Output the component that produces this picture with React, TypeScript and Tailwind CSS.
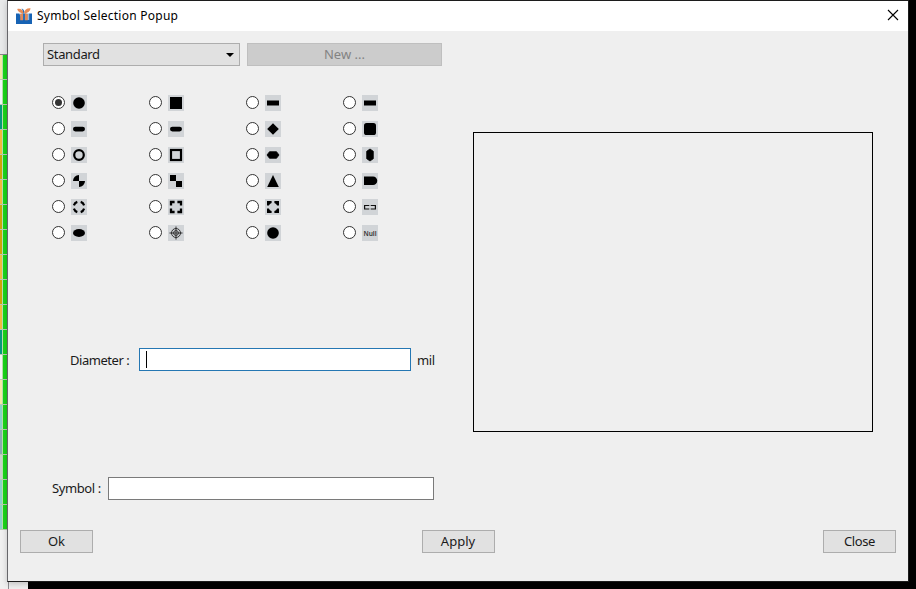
import { useState, type ReactNode } from "react";

const cells = [
  "bg-[#f4e8a8]", "bg-[#f1f5f8]", "bg-[#08987c]", "bg-[#f3b83e]", "bg-[#cfa208]",
  "bg-[#f3b83e]", "bg-[#cfa208]", "bg-[#cfa208]", "bg-[#f3b83e]", "bg-[#cfa208]",
  "bg-[#f3b83e]", "bg-[#08987c]", "bg-[#f4f4f4]", "bg-[#f4e8a8]", "bg-[#8bd0c8]",
  "bg-[#8ca9b0]", "bg-[#c9cfcb]", "bg-[#8bd0c8]", "bg-[#8bd0c8]",
];

const pill = <rect x="2" y="5.7" width="12" height="4.8" rx="2.4" />;
const bar = <rect x="2" y="5.5" width="12" height="5" />;
const disc = <circle cx="8" cy="8" r="5.8" />;

const symbols: { name: string; art: ReactNode }[] = [
  { name: "Round", art: disc },
  { name: "Square", art: <rect x="2" y="2" width="12" height="12" /> },
  { name: "Rectangle", art: bar },
  { name: "Rounded rectangle", art: bar },
  { name: "Oval", art: pill },
  { name: "Oblong", art: pill },
  { name: "Diamond", art: <path d="M8 2.2 13.8 8 8 13.8 2.2 8Z" /> },
  { name: "Octagon", art: <rect x="2" y="2" width="12" height="12" rx="2.6" /> },
  { name: "Donut", art: <circle cx="8" cy="8" r="4.8" fill="none" stroke="#000" strokeWidth="2.2" /> },
  { name: "Square donut", art: <rect x="3" y="3" width="10" height="10" fill="none" stroke="#000" strokeWidth="2.2" /> },
  { name: "Horizontal hexagon", art: <path d="M2 8 4.5 4.7h7L14 8l-2.5 3.3h-7Z" stroke="#000" strokeWidth=".8" strokeLinejoin="round" /> },
  { name: "Vertical hexagon", art: <path d="M8 2 11.3 4.3v7.4L8 14l-3.3-2.3V4.3Z" stroke="#000" strokeWidth=".8" strokeLinejoin="round" /> },
  { name: "Butterfly", art: <path d="M8 2v6H2A6 6 0 0 1 8 2ZM8 14V8h6a6 6 0 0 1-6 6Z" /> },
  { name: "Square butterfly", art: <path d="M2 2h6v6H2ZM8 8h6v6H8Z" /> },
  { name: "Triangle", art: <path d="M8 2 13.8 14H2.2Z" /> },
  { name: "Half oval", art: <path d="M2 3.5h9a4.2 4.2 0 0 1 0 8.5H2Z" /> },
  {
    name: "Round thermal",
    art: <path d="M2.9 6.3A5.3 5.3 0 0 1 6.3 2.9M9.7 2.9A5.3 5.3 0 0 1 13.1 6.3M13.1 9.7A5.3 5.3 0 0 1 9.7 13.1M6.3 13.1A5.3 5.3 0 0 1 2.9 9.7" fill="none" stroke="#000" strokeWidth="2.2" />,
  },
  {
    name: "Square thermal",
    art: <path d="M3 6.6V3h3.6M9.4 3H13v3.6M13 9.4V13H9.4M6.6 13H3V9.4" fill="none" stroke="#000" strokeWidth="2.3" />,
  },
  {
    name: "Square round thermal",
    art: <path d="M2 2h4.6v1.9A4.5 4.5 0 0 0 3.9 6.6H2ZM14 2v4.6h-1.9a4.5 4.5 0 0 0-2.7-2.7V2ZM14 14H9.4v-1.9a4.5 4.5 0 0 0 2.7-2.7H14ZM2 14V9.4h1.9a4.5 4.5 0 0 0 2.7 2.7V14Z" />,
  },
  {
    name: "Rectangle thermal",
    art: <path d="M7.3 6.5H2.6v3.5H7.3M8.7 6.5h4.7v3.5H8.7" fill="none" stroke="#111" strokeWidth="1.2" />,
  },
  { name: "Ellipse", art: <ellipse cx="8" cy="8" rx="6" ry="3.9" /> },
  {
    name: "Moire",
    art: (
      <g fill="none" stroke="#222" strokeWidth=".9">
        <circle cx="8" cy="8" r="4.5" />
        <circle cx="8" cy="8" r="2.4" />
        <path d="M8 1.5v13M1.5 8h13" />
      </g>
    ),
  },
  { name: "Hole", art: disc },
  {
    name: "Null",
    art: (
      <text x="8" y="10.5" textAnchor="middle" fontSize="6.6" fontWeight="600" fontFamily="Noto Sans, sans-serif" fill="#333">
        Null
      </text>
    ),
  },
];

const buttonClass = "flex h-[23px] w-[73px] items-center justify-center border border-[#adadad] bg-[#e1e1e1] pt-px";

function Logo() {
  return (
    <svg width="16" height="16" viewBox="0 0 16 16" className="shrink-0" aria-hidden="true">
      <path d="M0 5.5h16V16H0Z" fill="#1763b4" />
      <path d="M2.8 5h4.6v7H6.7M8.6 5h4.6v7H8.6Z" fill="#fff" opacity=".55" />
      <path d="M3.6 6.2 7 5v7.2H4.2V6.2ZM12.4 6.2 9 5v7.2h2.8V6.2Z" fill="#df8a5c" />
      <path d="M1.2 1C4.5.2 7.3 1.8 8 5.2 5 5.4 2 4.2 1.2 1Z" fill="#e88b55" />
      <path d="M14.6.4C11 0 8.5 1.8 8 5.2c3.2.2 6-1.4 6.6-4.8Z" fill="#e88b55" />
      <path d="M5.6.4C7.4 1 8.1 2.2 8.3 3.6 8 5 7.8 5.6 7.6 6 7.4 3.8 6.8 1.8 5.6.4Z" fill="#1763b4" />
      <path d="M7.4 5.5h1.2V13H7.4Z" fill="#1763b4" />
    </svg>
  );
}

export default function App() {
  const [selected, setSelected] = useState(0);
  return (
    <div className="relative h-[589px] w-[916px] overflow-hidden bg-black font-['Noto_Sans','Noto_Sans_CJK_SC',sans-serif] text-[13px] text-[#1a1a1a]">
      <div className="flex h-full w-7 flex-col bg-[#f0f0f0]">
        <div className="h-[55px] w-2 border-b border-[#85858a] bg-[#e8e9ea]" />
        {cells.map((cell, i) => (
          <div key={i} className="flex h-[25px] w-2 shrink-0 border-b border-[#b5ceb0]">
            <div className={`w-[2px] ${cell}`} />
            <div className="w-px bg-[#b8dfb0]" />
            <div className="grow bg-[#19d619]" />
          </div>
        ))}
        <div className="ml-2 grow border-l border-[#8e8e92]" />
      </div>

      <main className="absolute top-0 left-[7px] flex h-[582px] w-[902px] flex-col border border-[#1c1c1c] border-l-[#66666a] bg-[#efefef] shadow-[0_2px_6px_#0003]">
        <header className="flex h-[30px] shrink-0 items-center bg-white pl-2 pr-[9px]">
          <Logo />
          <h1 className="ml-[5px] grow text-[12px] leading-4 tracking-[0.25px] text-black">Symbol Selection Popup</h1>
          <button aria-label="Close window" className="mb-0.5">
            <svg width="12" height="12" viewBox="0 0 12 12">
              <path d="m1 1 10 10M11 1 1 11" stroke="#000" strokeWidth="1.1" />
            </svg>
          </button>
        </header>

        <div className="flex h-[499px] shrink-0">
          <section className="w-[465px] pt-3 pl-[35px]">
            <div className="flex gap-[7px]">
              <button className="flex h-[23px] w-[197px] items-center justify-between border border-[#adadad] bg-[#e1e1e1] pr-[5px] pl-[3px]">
                <span className="pt-px tracking-[-0.35px]">Standard</span>
                <svg width="8" height="4" viewBox="0 0 8 4"><path d="M0 0h8L4 4Z" /></svg>
              </button>
              <button disabled className="h-[23px] w-[195px] border border-[#bfbfbf] bg-[#cccccc] pt-px text-[#838383]">New ...</button>
            </div>

            <div className="mt-[29px] grid w-[397px] grid-cols-4 gap-y-[10px] pl-[9px]" role="radiogroup">
              {symbols.map(({ name, art }, i) => (
                <button key={name} role="radio" aria-checked={selected === i} aria-label={name} onClick={() => setSelected(i)} className="flex h-4 w-[97px] items-center gap-[6px]">
                  <svg width="13" height="13" viewBox="0 0 13 13" className="mb-px">
                    <circle cx="6.5" cy="6.5" r="6" fill="#fff" stroke="#333" />
                    {selected === i && <circle cx="6.5" cy="6.5" r="3.5" fill="#333" />}
                  </svg>
                  <svg width="16" height="16" viewBox="0 0 16 16" className="bg-[#d1d4d7]">{art}</svg>
                </button>
              ))}
            </div>

            <label className="mt-[107px] flex h-[23px] items-center pl-[27px]">
              <span className="w-[69px] pt-0.5 tracking-[-0.45px] whitespace-pre">Diameter :</span>
              <span className="flex h-[23px] w-[272px] items-center border border-[#2577b3] bg-white pl-[6px]">
                <span className="h-[17px] w-px bg-black" />
              </span>
              <span className="ml-[6px] pt-0.5 tracking-[-0.4px]">mil</span>
            </label>

            <label className="mt-[106px] flex h-[23px] items-center pl-[9px]">
              <span className="w-[56px] pt-px tracking-[-0.4px]">Symbol :</span>
              <span className="h-[23px] w-[326px] border border-[#7a7a7a] bg-white" />
            </label>
          </section>
          <div className="mt-[101px] h-[300px] w-[400px] border border-black" />
        </div>

        <footer className="flex justify-between pr-3 pl-3">
          <button className={buttonClass}>Ok</button>
          <button className={buttonClass}>Apply</button>
          <button className={`${buttonClass} tracking-[-0.4px]`}>Close</button>
        </footer>
      </main>
    </div>
  );
}
